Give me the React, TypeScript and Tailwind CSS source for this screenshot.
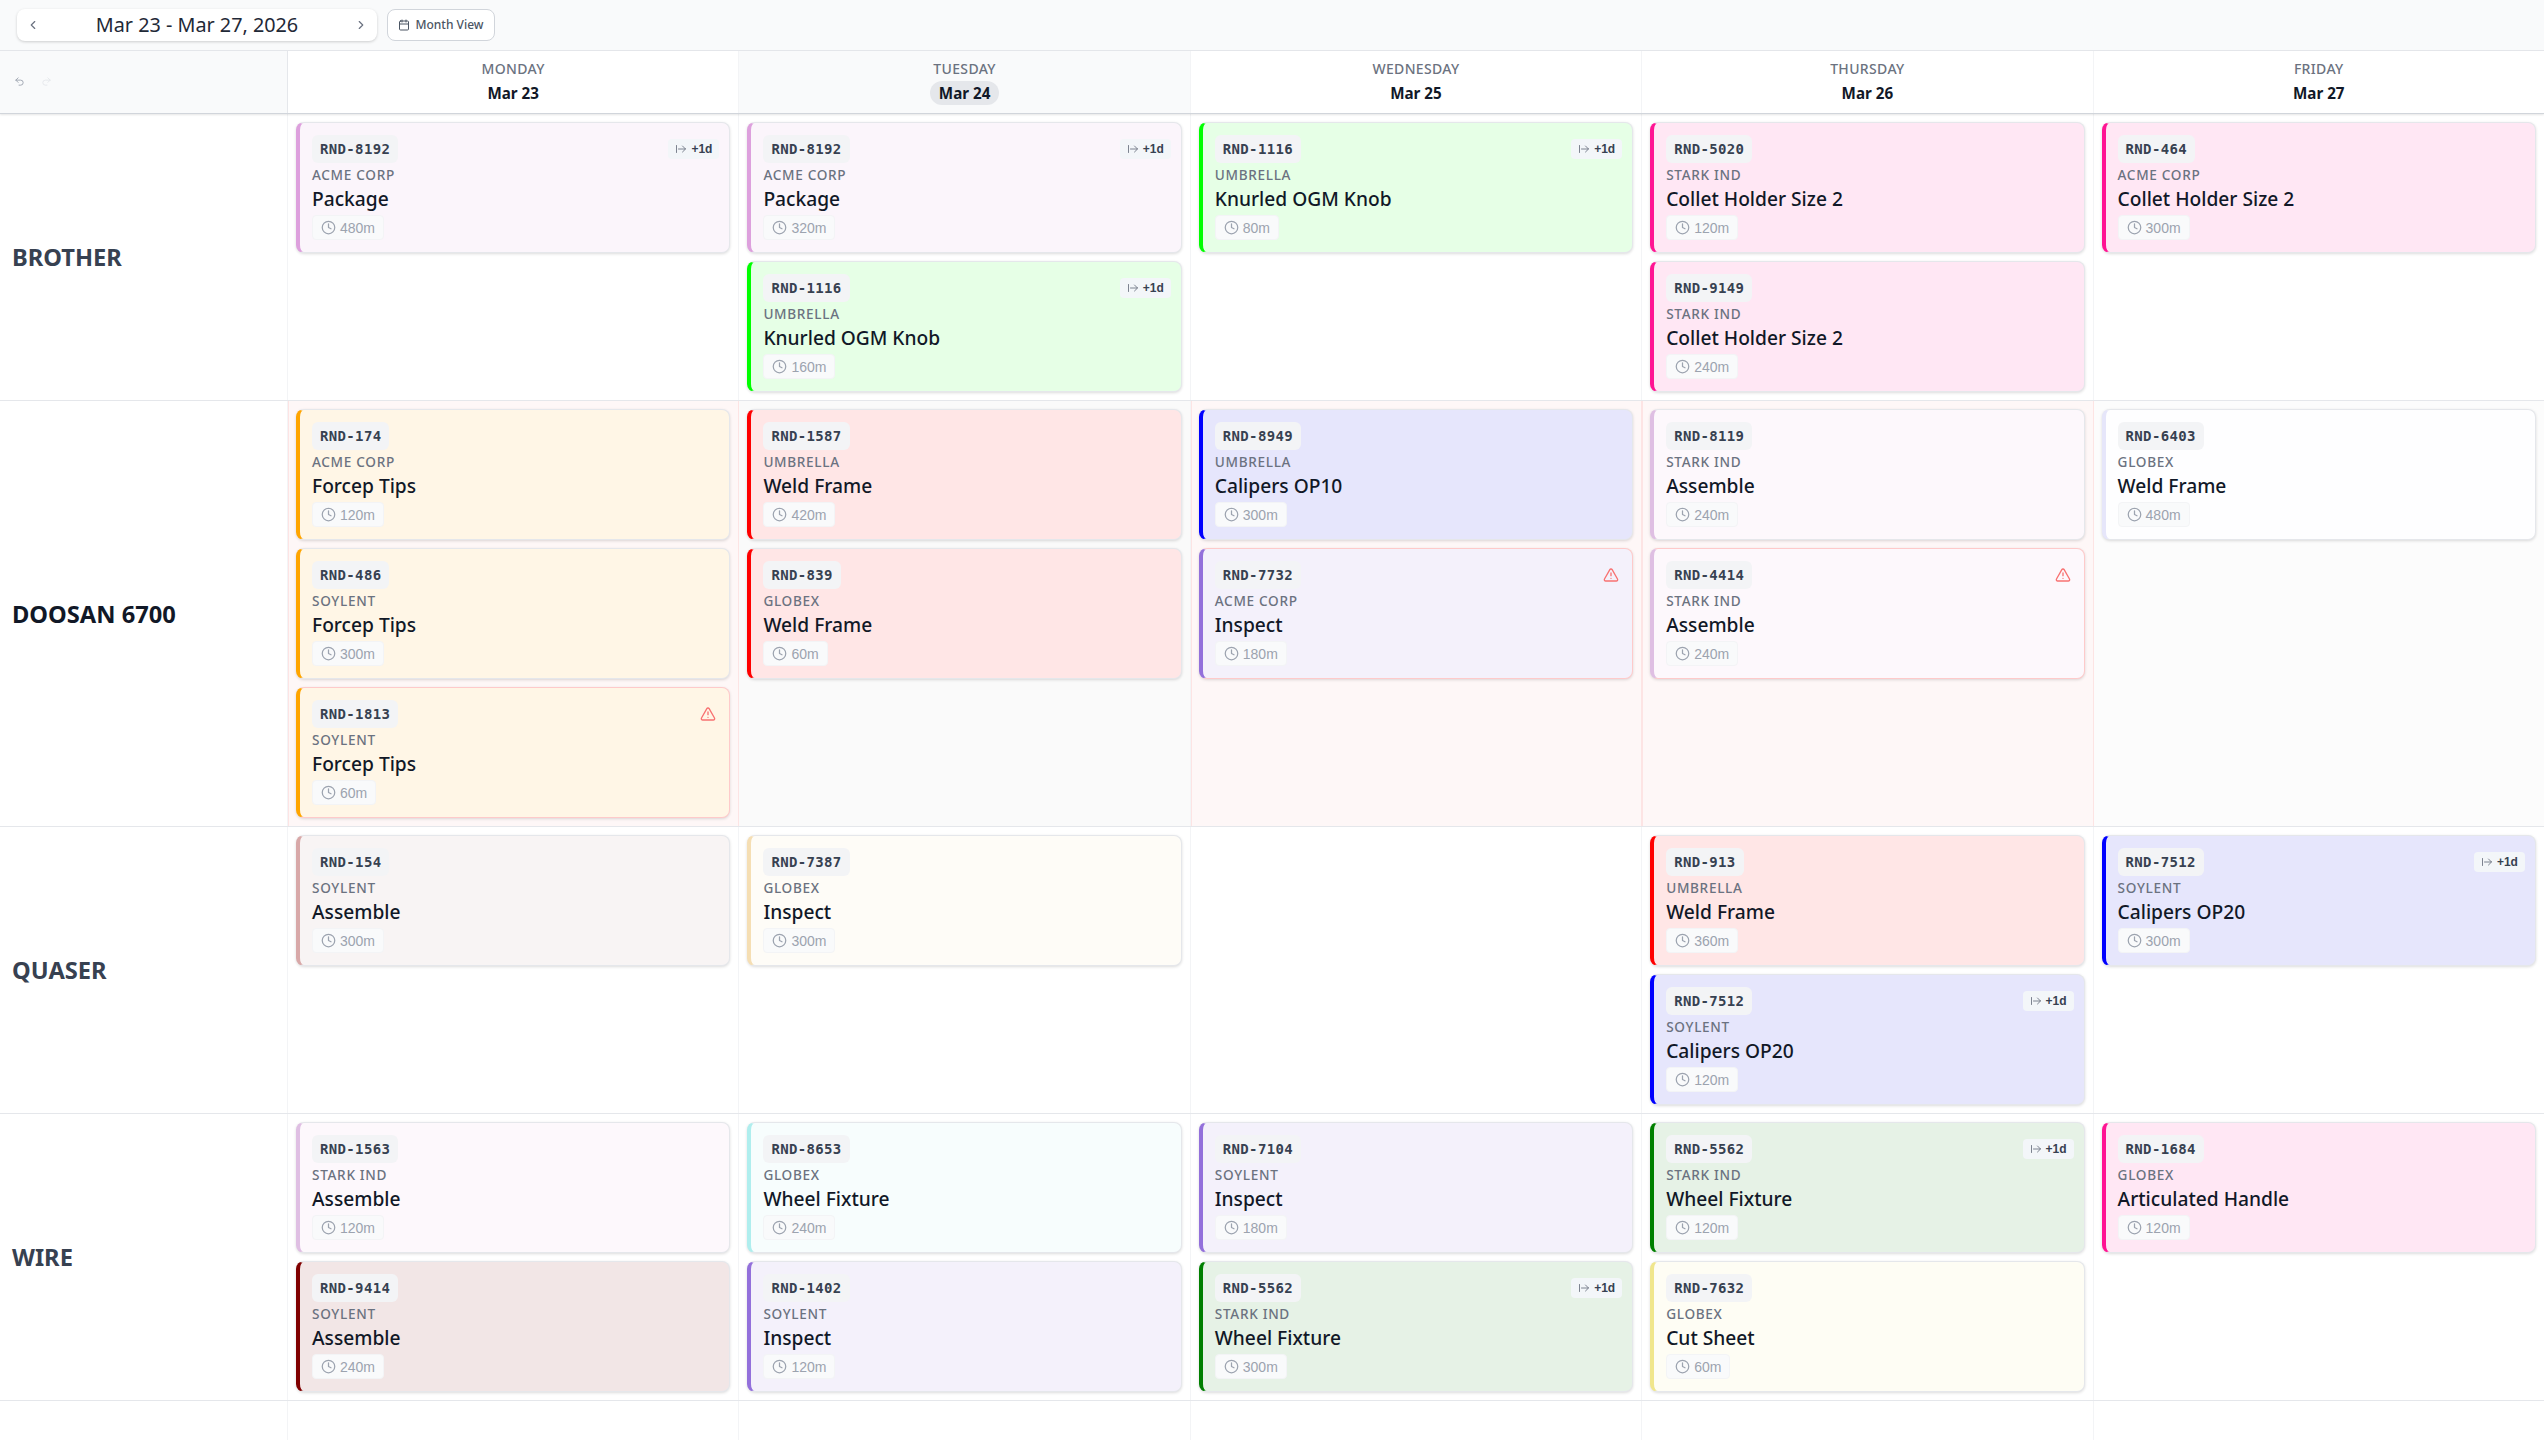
import React from 'react';
import { ArrowRightFromLine, Calendar, ChevronLeft, ChevronRight, Clock, Redo2, TriangleAlert, Undo2 } from 'lucide-react';

type Job = {
  id: string;
  client: string;
  title: string;
  mins: number;
  tone: string;
  carry?: boolean;
  warn?: boolean;
};

// left edge + 10% tint, pre-mixed so the conflict columns don't bleed through
const plum = 'border-l-[#dda0dd] bg-[#fbf5fb]';
const lime = 'border-l-[#00ff00] bg-[#e6ffe6]';
const pink = 'border-l-[#ff1493] bg-[#ffe7f4]';
const orange = 'border-l-[#ffa500] bg-[#fff6e6]';
const red = 'border-l-[#ff0000] bg-[#ffe6e6]';
const blue = 'border-l-[#0000ff] bg-[#e6e6fc]';
const thistle = 'border-l-[#dfbfe3] bg-[#fdf8fc]';
const purple = 'border-l-[#9370db] bg-[#f4f1fb]';
const rosy = 'border-l-[#d8a8a8] bg-[#f8f4f4]';
const wheat = 'border-l-[#f5deb3] bg-[#fefcf7]';
const aqua = 'border-l-[#afeeee] bg-[#f7fdfd]';
const maroon = 'border-l-[#800000] bg-[#f2e6e6]';
const green = 'border-l-[#008000] bg-[#e6f2e6]';
const khaki = 'border-l-[#f0e68c] bg-[#fefdf4]';
const lavender = 'border-l-[#e6e6fa] bg-[#fefeff]';

const conflict = 'bg-[#fef7f7] pr-[9px] shadow-[inset_1px_0_#fde4e4,inset_-1px_0_#fde4e4]';

const days = [
  { name: 'Monday', date: 'Mar 23' },
  { name: 'Tuesday', date: 'Mar 24', today: true },
  { name: 'Wednesday', date: 'Mar 25' },
  { name: 'Thursday', date: 'Mar 26' },
  { name: 'Friday', date: 'Mar 27' },
];

const rows: { label: string; busy?: boolean; tint?: string[]; cells: Job[][] }[] = [
  {
    label: 'BROTHER',
    cells: [
      [{ id: 'RND-8192', client: 'ACME CORP', title: 'Package', mins: 480, tone: plum, carry: true }],
      [
        { id: 'RND-8192', client: 'ACME CORP', title: 'Package', mins: 320, tone: plum, carry: true },
        { id: 'RND-1116', client: 'UMBRELLA', title: 'Knurled OGM Knob', mins: 160, tone: lime, carry: true },
      ],
      [{ id: 'RND-1116', client: 'UMBRELLA', title: 'Knurled OGM Knob', mins: 80, tone: lime, carry: true }],
      [
        { id: 'RND-5020', client: 'STARK IND', title: 'Collet Holder Size 2', mins: 120, tone: pink },
        { id: 'RND-9149', client: 'STARK IND', title: 'Collet Holder Size 2', mins: 240, tone: pink },
      ],
      [{ id: 'RND-464', client: 'ACME CORP', title: 'Collet Holder Size 2', mins: 300, tone: pink }],
    ],
  },
  {
    label: 'DOOSAN 6700',
    busy: true,
    tint: [conflict, 'bg-[#fafafa] border-r border-[#f3f4f6]', conflict, conflict, 'bg-[#fcfcfc] border-r border-[#f3f4f6]'],
    cells: [
      [
        { id: 'RND-174', client: 'ACME CORP', title: 'Forcep Tips', mins: 120, tone: orange },
        { id: 'RND-486', client: 'SOYLENT', title: 'Forcep Tips', mins: 300, tone: orange },
        { id: 'RND-1813', client: 'SOYLENT', title: 'Forcep Tips', mins: 60, tone: orange, warn: true },
      ],
      [
        { id: 'RND-1587', client: 'UMBRELLA', title: 'Weld Frame', mins: 420, tone: red },
        { id: 'RND-839', client: 'GLOBEX', title: 'Weld Frame', mins: 60, tone: red },
      ],
      [
        { id: 'RND-8949', client: 'UMBRELLA', title: 'Calipers OP10', mins: 300, tone: blue },
        { id: 'RND-7732', client: 'ACME CORP', title: 'Inspect', mins: 180, tone: purple, warn: true },
      ],
      [
        { id: 'RND-8119', client: 'STARK IND', title: 'Assemble', mins: 240, tone: thistle },
        { id: 'RND-4414', client: 'STARK IND', title: 'Assemble', mins: 240, tone: thistle, warn: true },
      ],
      [{ id: 'RND-6403', client: 'GLOBEX', title: 'Weld Frame', mins: 480, tone: lavender }],
    ],
  },
  {
    label: 'QUASER',
    cells: [
      [{ id: 'RND-154', client: 'SOYLENT', title: 'Assemble', mins: 300, tone: rosy }],
      [{ id: 'RND-7387', client: 'GLOBEX', title: 'Inspect', mins: 300, tone: wheat }],
      [],
      [
        { id: 'RND-913', client: 'UMBRELLA', title: 'Weld Frame', mins: 360, tone: red },
        { id: 'RND-7512', client: 'SOYLENT', title: 'Calipers OP20', mins: 120, tone: blue, carry: true },
      ],
      [{ id: 'RND-7512', client: 'SOYLENT', title: 'Calipers OP20', mins: 300, tone: blue, carry: true }],
    ],
  },
  {
    label: 'WIRE',
    cells: [
      [
        { id: 'RND-1563', client: 'STARK IND', title: 'Assemble', mins: 120, tone: thistle },
        { id: 'RND-9414', client: 'SOYLENT', title: 'Assemble', mins: 240, tone: maroon },
      ],
      [
        { id: 'RND-8653', client: 'GLOBEX', title: 'Wheel Fixture', mins: 240, tone: aqua },
        { id: 'RND-1402', client: 'SOYLENT', title: 'Inspect', mins: 120, tone: purple },
      ],
      [
        { id: 'RND-7104', client: 'SOYLENT', title: 'Inspect', mins: 180, tone: purple },
        { id: 'RND-5562', client: 'STARK IND', title: 'Wheel Fixture', mins: 300, tone: green, carry: true },
      ],
      [
        { id: 'RND-5562', client: 'STARK IND', title: 'Wheel Fixture', mins: 120, tone: green, carry: true },
        { id: 'RND-7632', client: 'GLOBEX', title: 'Cut Sheet', mins: 60, tone: khaki },
      ],
      [{ id: 'RND-1684', client: 'GLOBEX', title: 'Articulated Handle', mins: 120, tone: pink }],
    ],
  },
];

const JobCard: React.FC<{ job: Job }> = ({ job }) => (
  <div
    className={`h-[131px] rounded-lg border border-l-4 pl-3 pr-[13px] pt-3 shadow-[0_1px_3px_rgba(0,0,0,0.14)] ${
      job.warn ? 'border-y-[#fecaca] border-r-[#fecaca]' : 'border-y-[#e5e7eb] border-r-[#e5e7eb]'
    } ${job.tone}`}
  >
    <div className="flex items-center justify-between">
      <span className="flex h-7 items-center rounded-md bg-[#f3f4f6] px-2 font-['DejaVu_Sans_Mono',monospace] text-sm font-bold tracking-wide text-[#374151]">
        {job.id}
      </span>
      {job.carry && (
        <span className="-mr-[3px] flex h-5 items-center gap-1 rounded bg-[#f3f6f9] px-[7px] font-['Liberation_Sans',sans-serif] text-xs font-bold text-[#374151]">
          <ArrowRightFromLine className="h-3 w-3 text-[#6b7280]" strokeWidth={1.75} />
          +1d
        </span>
      )}
      {job.warn && <TriangleAlert className="h-4 w-4 text-[#f87171]" strokeWidth={2} />}
    </div>
    <div className="mt-[2px] text-[13.6px] leading-5 font-medium tracking-wider text-[#6b7280]">{job.client}</div>
    <div className="text-[19.2px] leading-[28px] font-medium text-[#111827]">{job.title}</div>
    <span className="mt-[2px] inline-flex h-[25px] items-center gap-1 rounded border border-[#f3f4f6] bg-[#f9fafb] px-2 font-['Liberation_Sans',sans-serif] text-sm text-[#9ca3af]">
      <Clock className="h-[15px] w-[15px]" strokeWidth={2} />
      {job.mins}m
    </span>
  </div>
);

export default function App() {
  return (
    <div className="flex h-screen flex-col overflow-hidden bg-white font-['Noto_Sans',sans-serif]">
      {/* toolbar */}
      <div className="flex h-[51px] shrink-0 items-center gap-[10px] border-b border-[#e5e7eb] bg-[#f9fafb] pl-[17px]">
        <div className="flex h-8 w-[360px] items-center justify-between rounded-lg bg-white px-[9px] shadow-[0_1px_3px_rgba(0,0,0,0.18)]">
          <ChevronLeft className="h-[14px] w-[14px] text-[#6b7280]" />
          <span className="text-[19.8px] leading-none text-[#1f2937]">Mar 23 - Mar 27, 2026</span>
          <ChevronRight className="h-[14px] w-[14px] text-[#6b7280]" />
        </div>
        <button className="flex h-8 w-[108px] items-center justify-center gap-[5px] rounded-lg border border-[#d1d5db] bg-white text-xs font-medium text-[#4b5563]">
          <Calendar className="h-3 w-3" />
          Month View
        </button>
      </div>

      {/* day header */}
      <div className="relative z-10 grid h-[63px] shrink-0 grid-cols-[288px_repeat(5,451.4px)] border-b border-[#d1d5db] shadow-[0_1px_2px_rgba(0,0,0,0.1)]">
        <div className="flex items-center gap-4 border-r border-[#e5e7eb] bg-[#f9fafb] pb-[2px] pl-[14px]">
          <Undo2 className="h-[11px] w-[11px] text-[#9ca3af]" />
          <Redo2 className="h-[11px] w-[11px] text-[#e5e7eb]" />
        </div>
        {days.map((d) => (
          <div
            key={d.name}
            className={`flex flex-col items-center border-r border-[#f3f4f6] pt-2 ${d.today ? 'bg-[#f9fafb]' : 'bg-white'}`}
          >
            <span className="text-sm leading-5 font-medium tracking-wide text-[#6b7280] uppercase">{d.name}</span>
            <span
              className={`mt-[2px] rounded-full px-[9px] text-[15.2px] leading-6 font-bold text-[#111827] ${d.today ? 'bg-[#e5e7eb]' : ''}`}
            >
              {d.date}
            </span>
          </div>
        ))}
      </div>

      {/* machine rows */}
      {rows.map((row) => (
        <div key={row.label} className="grid shrink-0 grid-cols-[288px_repeat(5,451.4px)] border-b border-[#e5e7eb]">
          <div className="flex items-center border-r border-[#f3f4f6] pl-3 pt-[2px]">
            <span className={`text-[23.7px] font-bold ${row.busy ? 'text-[#111827]' : 'text-[#374151]'}`}>{row.label}</span>
          </div>
          {row.cells.map((jobs, i) => (
            <div
              key={i}
              className={`flex flex-col gap-2 p-2 ${row.tint ? row.tint[i] : 'border-r border-[#f3f4f6]'}`}
            >
              {jobs.map((job) => (
                <JobCard key={job.id + job.mins} job={job} />
              ))}
            </div>
          ))}
        </div>
      ))}

      {/* empty remainder of the grid */}
      <div className="grid flex-1 grid-cols-[288px_repeat(5,451.4px)]">
        {[0, 1, 2, 3, 4, 5].map((i) => (
          <div key={i} className="border-r border-[#f3f4f6]" />
        ))}
      </div>
    </div>
  );
}
